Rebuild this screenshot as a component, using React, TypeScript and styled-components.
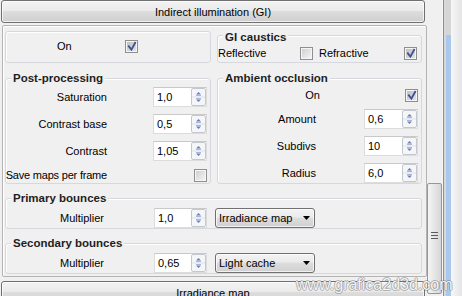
import React from "react";
import styled, { createGlobalStyle } from "styled-components";

const GlobalStyle = createGlobalStyle`
  html, body { margin: 0; padding: 0; background: #f0f0f0; }
  body {
    font-family: "Liberation Sans", Arial, sans-serif;
    font-size: 11px;
    color: #000;
  }
  * { box-sizing: border-box; }
`;

const Screen = styled.div`
  position: relative;
  width: 462px;
  height: 296px;
  overflow: hidden;
  display: flex;
  background: #f0f0f0;
`;

const MainColumn = styled.div`
  width: 427px;
  flex-shrink: 0;
  display: flex;
  flex-direction: column;
`;

const RolloutButton = styled.div<{ $gap: number }>`
  flex-shrink: 0;
  margin: ${(p) => p.$gap}px 0 0 1px;
  width: 424px;
  height: 23px;
  border: 1px solid #707070;
  border-radius: 3px;
  background: linear-gradient(#f3f3f3 0%, #ebebeb 45%, #dddddd 50%, #cfcfcf 100%);
  box-shadow: inset 0 0 0 1px rgba(255, 255, 255, 0.7);
  display: flex;
  align-items: center;
  justify-content: center;
  padding-top: 1px;
  line-height: 13px;
`;

const Panel = styled.div`
  flex-shrink: 0;
  margin: 2px 0 0 2px;
  width: 425px;
  border: 1px solid #b4b4b4;
  border-radius: 2px;
  box-shadow: inset 1px 1px 0 #ffffff;
  padding: 1px 4px 2px 2px;
  display: flex;
  flex-direction: column;
`;

const TwoCols = styled.div<{ $gap?: number }>`
  display: grid;
  grid-template-columns: 206px 205px;
  column-gap: 6px;
  margin-top: ${(p) => p.$gap ?? 0}px;
`;

const Group = styled.fieldset<{ $gap?: number }>`
  margin: ${(p) => p.$gap ?? 0}px 0 0 0;
  padding: 0;
  min-width: 0;
  border: 1px solid #d5d9de;
  border-radius: 3px;
  box-shadow: inset 1px 1px 0 #ffffff;
`;

const Legend = styled.legend<{ $padTop?: number }>`
  margin-left: 5px;
  padding: ${(p) => p.$padTop ?? 0}px 2px 0 2px;
  font-weight: bold;
  font-size: 11.5px;
  line-height: 14px;
  color: #1e1e1e;
  background: #f0f0f0;
`;

const PlainGroup = styled.div`
  margin-top: 4px;
  border: 1px solid #d5d9de;
  border-radius: 3px;
  box-shadow: inset 1px 1px 0 #ffffff;
  display: flex;
  align-items: center;
  padding: 0 0 2px 51px;
`;

const InlineRow = styled.div`
  display: flex;
  align-items: center;
  height: 18px;
`;

const InlineText = styled.span<{ $w: number; $pl?: number }>`
  width: ${(p) => p.$w}px;
  padding-left: ${(p) => p.$pl ?? 0}px;
  white-space: nowrap;
  line-height: 14px;
`;

const FormGrid = styled.div<{ $cols: string; $colGap: number; $pt: number }>`
  display: grid;
  grid-template-columns: ${(p) => p.$cols};
  column-gap: ${(p) => p.$colGap}px;
  row-gap: 7px;
  padding-top: ${(p) => p.$pt}px;
  align-items: center;
`;

const Label = styled.span<{ $shift?: number; $tight?: boolean }>`
  justify-self: end;
  white-space: nowrap;
  line-height: 14px;
  margin-right: ${(p) => -(p.$shift ?? 0)}px;
  letter-spacing: ${(p) => (p.$tight ? "-0.2px" : "0")};
`;

const CheckCell = styled.span`
  justify-self: end;
  display: flex;
`;

const CheckBox = styled.span<{ $on?: boolean }>`
  width: 13px;
  height: 13px;
  flex-shrink: 0;
  border: 1px solid #8e8f8f;
  box-shadow: inset 0 0 0 1px #f6f6f6;
  background: ${(p) =>
    p.$on
      ? "linear-gradient(135deg, #bdbdbd, #e6e6e6)"
      : "linear-gradient(135deg, #cdcdcd, #f7f7f7)"};
  display: inline-flex;
  align-items: center;
  justify-content: center;
`;

const Field = styled.div<{ $w: number }>`
  width: ${(p) => p.$w}px;
  height: 20px;
  background: #ffffff;
  border: 1px solid #dcdcdc;
  border-top-color: #c9c9c9;
  display: flex;
  align-items: center;
  padding-left: 3px;
`;

const FieldValue = styled.span`
  flex: 1;
  line-height: 14px;
`;

const BounceRow = styled.div`
  display: flex;
  align-items: center;
  gap: 8px;
  padding-top: 3px;
`;

const BounceLabel = styled.span`
  width: 140px;
  padding-right: 42px;
  text-align: right;
  line-height: 14px;
`;

const Dropdown = styled.div`
  width: 100px;
  height: 20px;
  border: 1px solid #707070;
  border-radius: 3px;
  background: linear-gradient(#f3f3f3 0%, #ebebeb 45%, #dddddd 50%, #d0d0d0 100%);
  box-shadow: inset 0 0 0 1px rgba(255, 255, 255, 0.7);
  display: flex;
  align-items: center;
  justify-content: space-between;
  padding: 0 4px 0 3px;
  line-height: 14px;
`;

const ScrollTrack = styled.div`
  width: 15px;
  flex-shrink: 0;
  padding-top: 183px;
  background: #f0f0f0;
`;

const Thumb = styled.div`
  height: 111px;
  border: 1px solid #979797;
  border-radius: 2px;
  background: linear-gradient(to right, #f4f4f4, #e6e6e6 50%, #d6d6d6);
  display: flex;
  justify-content: center;
  padding-top: 48px;
`;

const EdgeLine = styled.div<{ $w: number; $c: string }>`
  width: ${(p) => p.$w}px;
  flex-shrink: 0;
  background: ${(p) => p.$c};
`;

const BlueStrip = styled.div`
  width: 5px;
  flex-shrink: 0;
  background: linear-gradient(to bottom, #d6d6d6 0, #d6d6d6 35px, #a9c8ec 35px, #a9c8ec 100%);
`;

const OuterEdge = styled.div`
  flex: 1;
  background: linear-gradient(to right, #f7f7f7, #e4e4e4);
`;

const Watermark = styled.div`
  position: absolute;
  left: 296px;
  top: 276px;
  font-family: "Liberation Sans", Arial, sans-serif;
  font-size: 16px;
  line-height: 18px;
  color: #f4f4f4;
  white-space: nowrap;
  pointer-events: none;
  text-shadow: -1px 0 rgba(110, 110, 110, 0.45), 1px 0 rgba(110, 110, 110, 0.45),
    0 -1px rgba(110, 110, 110, 0.45), 0 1px rgba(110, 110, 110, 0.45);
`;

const Check = () => (
  <svg width="11" height="11" viewBox="0 0 11 11">
    <path d="M2.3 4.6 L5.4 8.6 L9.6 1" stroke="#3e5196" strokeWidth="1.8" fill="none" />
  </svg>
);

const SpinIcon = () => (
  <svg width="15" height="18" viewBox="0 0 15 18" style={{ flexShrink: 0 }}>
    <rect x="0.5" y="0.5" width="14" height="17" rx="1.5" fill="#f5f6f8" stroke="#c3c8d0" />
    <line x1="1" y1="9" x2="14" y2="9" stroke="#dde1e8" />
    <path d="M5 6.5 L10 6.5 L7.5 4 Z" fill="#6a7ebe" />
    <line x1="5" y1="7.5" x2="10" y2="7.5" stroke="#aab5da" />
    <line x1="5" y1="10.5" x2="10" y2="10.5" stroke="#aab5da" />
    <path d="M5 11.5 L10 11.5 L7.5 14 Z" fill="#6a7ebe" />
  </svg>
);

const DropArrow = () => (
  <svg width="7" height="4" viewBox="0 0 7 4">
    <path d="M0 0 L7 0 L3.5 4 Z" fill="#000" />
  </svg>
);

const Grip = () => (
  <svg width="7" height="8" viewBox="0 0 7 8">
    <line x1="0" y1="0.5" x2="7" y2="0.5" stroke="#5a5a5a" />
    <line x1="0" y1="3.5" x2="7" y2="3.5" stroke="#5a5a5a" />
    <line x1="0" y1="6.5" x2="7" y2="6.5" stroke="#5a5a5a" />
  </svg>
);

const Spinner = ({ w, value }: { w: number; value: string }) => (
  <Field $w={w}>
    <FieldValue>{value}</FieldValue>
    <SpinIcon />
  </Field>
);

export default function App() {
  return (
    <Screen>
      <GlobalStyle />
      <MainColumn>
        <RolloutButton $gap={0}>Indirect illumination (GI)</RolloutButton>
        <Panel>
          <TwoCols>
            <PlainGroup>
              <InlineText $w={68}>On</InlineText>
              <CheckBox $on>
                <Check />
              </CheckBox>
            </PlainGroup>
            <Group>
              <Legend $padTop={3}>GI caustics</Legend>
              <InlineRow>
                <InlineText $w={82}>Reflective</InlineText>
                <CheckBox />
                <InlineText $w={91} $pl={6}>
                  Refractive
                </InlineText>
                <CheckBox $on>
                  <Check />
                </CheckBox>
              </InlineRow>
            </Group>
          </TwoCols>
          <TwoCols $gap={8}>
            <Group>
              <Legend>Post-processing</Legend>
              <FormGrid $cols="101px 54px" $colGap={46} $pt={2}>
                <Label>Saturation</Label>
                <Spinner w={54} value="1,0" />
                <Label>Contrast base</Label>
                <Spinner w={54} value="0,5" />
                <Label>Contrast</Label>
                <Spinner w={54} value="1,05" />
                <Label $tight>Save maps per frame</Label>
                <CheckCell>
                  <CheckBox />
                </CheckCell>
              </FormGrid>
            </Group>
            <Group>
              <Legend>Ambient occlusion</Legend>
              <FormGrid $cols="98px 54px" $colGap={48} $pt={3}>
                <Label $shift={4}>On</Label>
                <CheckCell>
                  <CheckBox $on>
                    <Check />
                  </CheckBox>
                </CheckCell>
                <Label>Amount</Label>
                <Spinner w={54} value="0,6" />
                <Label>Subdivs</Label>
                <Spinner w={54} value="10" />
                <Label>Radius</Label>
                <Spinner w={54} value="6,0" />
              </FormGrid>
            </Group>
          </TwoCols>
          <Group $gap={7}>
            <Legend>Primary bounces</Legend>
            <BounceRow>
              <BounceLabel>Multiplier</BounceLabel>
              <Spinner w={53} value="1,0" />
              <Dropdown>
                <span>Irradiance map</span>
                <DropArrow />
              </Dropdown>
            </BounceRow>
          </Group>
          <Group $gap={7}>
            <Legend>Secondary bounces</Legend>
            <BounceRow>
              <BounceLabel>Multiplier</BounceLabel>
              <Spinner w={53} value="0,65" />
              <Dropdown>
                <span>Light cache</span>
                <DropArrow />
              </Dropdown>
            </BounceRow>
          </Group>
        </Panel>
        <RolloutButton $gap={4}>Irradiance map</RolloutButton>
      </MainColumn>
      <ScrollTrack>
        <Thumb>
          <Grip />
        </Thumb>
      </ScrollTrack>
      <EdgeLine $w={1} $c="#f6f6f6" />
      <EdgeLine $w={1} $c="#8f8f8f" />
      <EdgeLine $w={2} $c="#d8d8d8" />
      <BlueStrip />
      <OuterEdge />
      <Watermark>www.grafica2d3d.com</Watermark>
    </Screen>
  );
}
